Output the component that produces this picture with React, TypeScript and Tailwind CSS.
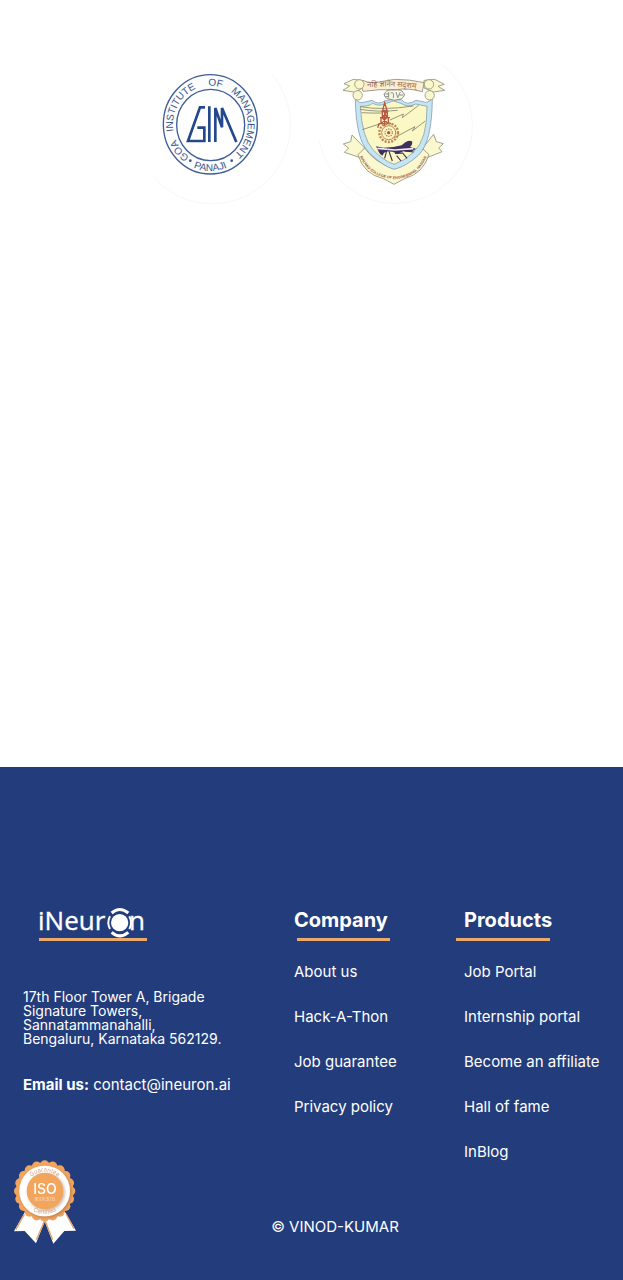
const company = ["About us", "Hack-A-Thon", "Job guarantee", "Privacy policy"];
const products = ["Job Portal", "Internship portal", "Become an affiliate", "Hall of fame", "InBlog"];

function GimLogo() {
  return (
    <svg viewBox="0 0 510 510" className="w-[170px]" role="img" aria-label="Goa Institute of Management">
      <defs>
        <path id="gim-top" d="M211 341 A112 117 0 0 1 211 107 A112 117 0 0 1 211 341" />
        <path id="gim-bottom" d="M77 224 A134 139 0 0 0 345 224" />
      </defs>
      <path d="M395 73 A235 235 0 0 1 40 381" fill="none" stroke="#f8f8f8" strokeWidth="3" />
      <ellipse cx="211" cy="223" rx="141" ry="149" fill="#fbfdfe" stroke="#3f5c96" strokeWidth="4" />
      <ellipse cx="212" cy="225" rx="102" ry="107" fill="#fff" stroke="#3f5c96" strokeWidth="4" />
      <g fill="#3b5488" fontFamily="Liberation Sans, sans-serif" fontSize="30" textAnchor="middle">
        <text><textPath href="#gim-top" startOffset="14%">GOA</textPath></text>
        <text><textPath href="#gim-top" startOffset="33%">INSTITUTE</textPath></text>
        <text><textPath href="#gim-top" startOffset="52%">OF</textPath></text>
        <text><textPath href="#gim-top" startOffset="74%">MANAGEMENT</textPath></text>
        <text><textPath href="#gim-bottom" startOffset="50%">PANAJI</textPath></text>
      </g>
      <circle cx="151" cy="332" r="4" fill="#3b5488" />
      <circle cx="275" cy="332" r="4" fill="#3b5488" />
      <path
        d="M195 172 H180 L144 273 H193 V233 H172 M208 169 V276 M226 276 V174 L246 232 V174 L289 276"
        fill="none" stroke="#24488c" strokeWidth="8"
      />
    </svg>
  );
}

function CrestLogo() {
  return (
    <svg viewBox="0 0 510 510" className="w-[170px]" role="img" aria-label="College of Engineering">
      <defs>
        <path id="crest-motto" d="M172 112 Q253 104 350 121" />
        <path id="crest-name" d="M147 312 Q174 383 253 387 Q328 383 353 312" />
      </defs>
      <path d="M395 43 A232 232 0 1 1 27 270" fill="none" stroke="#f8f8f8" strokeWidth="3" />
      <g fill="#fbf7cf" stroke="#8f9077" strokeWidth="2.5" strokeLinejoin="round">
        <path d="M160 92 L130 88 L102 101 L119 108 L99 121 L137 127 L160 112Z" />
        <path d="M342 91 L374 88 L403 103 L384 109 L404 121 L370 126 L342 114Z" />
        <path d="M164 294 L126 255 L122 275 L100 282 L116 294 L103 307 L148 322Z" />
        <path d="M338 294 L371 253 L379 275 L400 281 L386 294 L396 305 L354 322Z" />
        <path d="M144 314 Q160 372 220 386 L252 403 L284 386 Q340 370 357 314 L336 294 Q308 337 252 356 Q193 337 164 294Z" />
      </g>
      <path d="M136 146 Q146 163 165 156 L187 151 Q204 166 224 153 L244 149 L274 149 Q291 169 318 151 L339 155 Q352 162 367 146 Q366 275 326 315 Q288 350 252 358 Q217 348 175 306 Q137 265 136 146Z" fill="#c6e5f2" stroke="#718ba5" strokeWidth="2" />
      <path d="M151 169 Q178 169 188 160 Q209 171 228 160 L250 153 L273 160 Q295 174 317 162 L351 169 Q352 270 310 307 Q284 333 252 343 Q219 331 188 298 Q156 261 151 169Z" fill="#fbf8c6" stroke="#738ca4" strokeWidth="2" />
      <path d="M150 170 Q216 182 310 168 M151 178 Q203 187 263 181 M155 188 Q188 190 215 189 M157 239 L214 220 M240 210 L280 192 L277 203 L326 166 M251 264 L315 230 L307 243 L346 213" fill="none" stroke="#82836c" strokeWidth="2.5" />
      <path d="M224 158 L218 181 H231Z M214 184 H235 M217 184 V201 M232 184 V201 M210 203 H240 M213 203 V222 M235 203 V222 M206 221 H244 M207 221 L203 233 M220 182 L231 202 L215 220 M231 184 L216 203 L235 222 M224 181 V229" fill="none" stroke="#bb5745" strokeWidth="4" />
      <g fill="none" stroke="#bc8750">
        <circle cx="236" cy="248" r="28" strokeWidth="7" strokeDasharray="6 4" />
        <circle cx="236" cy="248" r="21" strokeWidth="3" />
        <circle cx="236" cy="248" r="11" strokeWidth="4" strokeDasharray="4 3" />
      </g>
      <circle cx="236" cy="248" r="5" fill="#a95843" />
      <path d="M198 289 L220 293 L250 291 L275 286 L286 277 Q295 269 306 274 Q309 284 300 291 L318 296 L304 306 L280 304 L263 312 L248 305 L225 304 L217 317 L208 309Z" fill="#3c315b" />
      <path d="M202 295 L254 300 L310 296" fill="none" stroke="#eeeafd" strokeWidth="5" />
      <path d="M211 312 L230 302 L224 325 M237 304 L247 333 M255 310 L278 309 L291 325 M260 317 L273 333 M283 303 L311 306" fill="none" stroke="#3c315b" strokeWidth="3.5" />
      <path d="M158 91 Q184 103 218 94 L254 88 Q300 88 342 98 L337 125 Q294 113 258 119 Q205 117 159 124 L155 110Z" fill="#fdeed3" stroke="#8b8b75" strokeWidth="2.5" />
      <g fill="#fbf7cd" stroke="#939578" strokeWidth="2.5">
        <circle cx="148" cy="103" r="14" /><circle cx="357" cy="103" r="14" />
        <circle cx="143" cy="136" r="14" /><circle cx="359" cy="136" r="14" />
      </g>
      <path d="M226 127 Q232 118 253 120 Q275 117 279 127 Q289 136 274 147 Q253 155 231 146 Q217 134 226 127Z" fill="#f9f7e5" stroke="#858c7c" strokeWidth="3" />
      <path d="M236 126 V143 M242 129 Q253 123 250 144 M258 126 L263 143 L271 126 M226 132 H237 M226 140 H235 M268 135 H280" fill="none" stroke="#767c75" strokeWidth="2.5" />
      <text fill="#93694b" fontFamily="Noto Sans Devanagari, Noto Sans, sans-serif" fontSize="23"><textPath href="#crest-motto">नहि ज्ञानेन सदृशम्</textPath></text>
      <text fill="#9b5641" fontFamily="Liberation Sans, sans-serif" fontSize="11" fontWeight="700" textAnchor="middle"><textPath href="#crest-name" startOffset="50%">MALNAD COLLEGE OF ENGINEERING, HASSAN</textPath></text>
    </svg>
  );
}

function NeuronLogo() {
  return (
    <svg viewBox="9 -30 450 150" className="w-[150px]" role="img" aria-label="iNeuron">
      <g fill="#fff" stroke="#fff" strokeWidth="1" fontFamily="Open Sans, sans-serif" fontSize="78">
        <text x="54" y="75">iNeur</text>
        <text x="327" y="75">n</text>
      </g>
      <circle cx="299" cy="53" r="26" fill="#fff" />
      <g fill="none" stroke="#fff" strokeWidth="6">
        <path d="M275 24 Q299 3 325 24 M275 82 Q299 103 325 82" strokeWidth="9" />
        <path d="M270 34 Q260 53 270 72 M328 34 Q338 53 328 72" />
      </g>
    </svg>
  );
}

function IsoBadge() {
  const petals = Array.from({ length: 20 }, (_, i) => {
    const a = (i * Math.PI) / 10;
    return { x: 134 + 78 * Math.cos(a), y: 123 + 78 * Math.sin(a) };
  });
  return (
    <svg viewBox="0 0 300 330" className="fixed bottom-5 left-0 w-[100px]" role="img" aria-label="ISO certified">
      <defs>
        <path id="iso-top" d="M76 123 A58 58 0 0 1 192 123" />
        <path id="iso-bottom" d="M65 123 A69 69 0 0 0 203 123" />
        <filter id="iso-shadow" x="-20%" y="-20%" width="150%" height="150%">
          <feDropShadow dx="4" dy="4" stdDeviation="4" floodColor="#77533f" floodOpacity="0.45" />
        </filter>
      </defs>
      <path d="M76 184 L42 244 L74 243 L108 280 L140 200 L124 205Z" fill="#fff" />
      <path d="M194 184 L228 242 L193 243 L160 281 L129 200 L151 203Z" fill="#fff" />
      <path d="M73 193 L48 238 M137 205 L109 269 M132 205 L158 269 M198 192 L222 236" stroke="#e6a16c" strokeWidth="4" />
      <g fill="#f2a55d">
        {petals.map((p, i) => <circle key={i} cx={p.x} cy={p.y} r="14" />)}
        <circle cx="134" cy="123" r="86" />
      </g>
      <circle cx="134" cy="123" r="76" fill="#fff" filter="url(#iso-shadow)" />
      <circle cx="135" cy="123" r="55" fill="#f2a55d" filter="url(#iso-shadow)" />
      <g textAnchor="middle" fontFamily="Inter, sans-serif">
        <g fill="#d7a888" fontSize="18">
          <text><textPath href="#iso-top" startOffset="50%">Guarantee</textPath></text>
          <text><textPath href="#iso-bottom" startOffset="50%">Certified</textPath></text>
        </g>
        <text x="135" y="133" fill="#fff" fontSize="42" fontWeight="500">ISO</text>
        <text x="135" y="152" fill="#fbe2c9" fontSize="13">9001:2015</text>
      </g>
    </svg>
  );
}

function LinkList({ items }: { items: string[] }) {
  return (
    <ul className="mt-[21px] flex flex-col gap-[25px] whitespace-nowrap text-[15px] leading-5">
      {items.map((item) => (
        <li key={item}><a href="#">{item}</a></li>
      ))}
    </ul>
  );
}

export default function App() {
  return (
    <div className="bg-white font-['Inter',sans-serif]">
      <main className="flex justify-center pt-[50px] pr-[3px] pb-[547px]">
        <GimLogo />
        <CrestLogo />
      </main>
      <footer className="bg-[#233c7b] px-[23px] pt-32 pb-[43px] text-white">
        <div className="grid grid-cols-[271fr_170fr_136fr]">
          <section>
            <div className="h-[46px]">
              <NeuronLogo />
            </div>
            <div className="-mt-[3px] ml-4 h-[3px] w-[108px] bg-[#eba96b]" />
            <address className="mt-[49px] text-sm leading-[14px] not-italic">
              17th Floor Tower A, Brigade<br />Signature Towers,<br />Sannatammanahalli,<br />Bengaluru, Karnataka 562129.
            </address>
            <p className="mt-[29px] text-[15px] leading-5">
              <strong>Email us:</strong> <a href="mailto:contact@ineuron.ai">contact@ineuron.ai</a>
            </p>
          </section>
          <nav aria-label="Company" className="pt-2.5">
            <h2 className="text-xl leading-[30px] font-bold">Company</h2>
            <div className="mt-[3px] ml-[3px] h-[3px] w-[93px] bg-[#eba96b]" />
            <LinkList items={company} />
          </nav>
          <nav aria-label="Products" className="pt-2.5">
            <h2 className="text-xl leading-[30px] font-bold">Products</h2>
            <div className="mt-[3px] -ml-2 h-[3px] w-[94px] bg-[#eba96b]" />
            <LinkList items={products} />
          </nav>
        </div>
        <p className="mt-[55px] pl-[47px] text-center text-[15px] leading-5">© VINOD-KUMAR</p>
      </footer>
      <IsoBadge />
    </div>
  );
}
